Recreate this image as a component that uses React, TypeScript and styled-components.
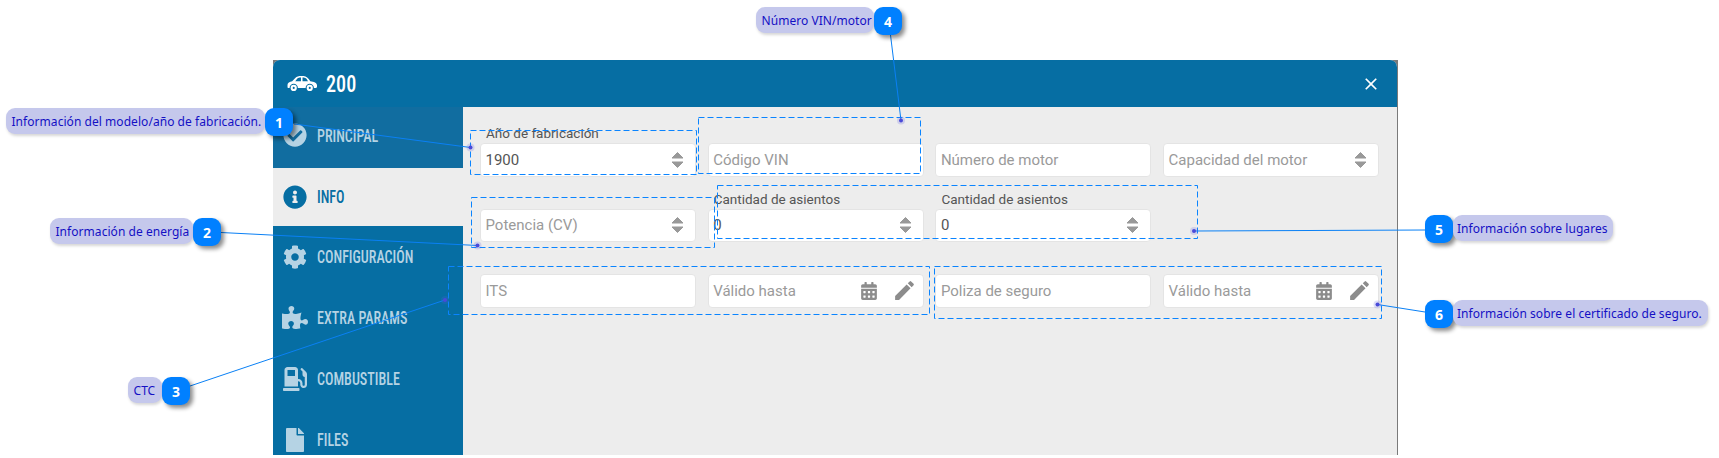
import React from "react";
import styled, { createGlobalStyle } from "styled-components";
import {
  FaCalendarAlt,
  FaCheckCircle,
  FaCog,
  FaFile,
  FaGasPump,
  FaInfoCircle,
  FaPuzzlePiece,
} from "react-icons/fa";
import { MdClose, MdEdit } from "react-icons/md";

const GlobalStyle = createGlobalStyle`
  html, body {
    margin: 0;
    background: #fff;
    font-family: Roboto, "Liberation Sans", sans-serif;
  }
`;

const Page = styled.div`
  position: relative;
  width: 1719px;
  height: 458px;
  overflow: hidden;
  padding: 60px 0 0 273px;
  box-sizing: border-box;
`;

const Backdrop = styled.div`
  width: 1125px;
  height: 395px;
  background: #7a7a7a;
  padding-right: 1px;
  box-sizing: border-box;
`;

const Modal = styled.div`
  height: 100%;
  display: flex;
  flex-direction: column;
  border-radius: 7px 7px 0 0;
  overflow: hidden;
  background: #ededed;
`;

const Header = styled.header`
  height: 47px;
  flex: none;
  display: flex;
  align-items: center;
  gap: 9px;
  padding: 0 16px 0 14px;
  background: #066ea3;
  color: #fff;
`;

const Title = styled.h1`
  flex: 1;
  margin: 0;
  font-size: 24px;
  font-weight: 500;
  font-stretch: 75%;
  line-height: 1;
  transform: scaleX(0.84);
  transform-origin: left center;
`;

const Body = styled.div`
  flex: 1;
  display: flex;
  min-height: 0;
`;

const Sidebar = styled.nav`
  width: 190px;
  flex: none;
  background: #066ea3;
  overflow: hidden;
`;

const NavItem = styled.div<{ $active?: boolean; $selected?: boolean; $height?: number }>`
  height: ${(p) => p.$height ?? 61}px;
  box-sizing: border-box;
  display: flex;
  align-items: center;
  gap: 9px;
  padding: 0 0 ${(p) => (p.$selected ? 5 : p.$active ? 1 : 0)}px 9px;
  background: ${(p) => (p.$active ? "#ededed" : p.$selected ? "#116da0" : "#066ea3")};
  color: ${(p) => (p.$active ? "#066ea3" : "#b5d3e4")};
`;

const NavIcon = styled.span`
  width: 26px;
  display: flex;
  justify-content: center;
  font-size: 24px;
  flex: none;
`;

const NavLabel = styled.span`
  display: inline-block;
  font-size: 19px;
  font-weight: 500;
  font-stretch: 75%;
  white-space: nowrap;
  transform: scaleX(0.74);
  transform-origin: left center;
`;

const Form = styled.main`
  flex: 1;
  display: grid;
  grid-template-columns: repeat(4, 216px);
  grid-auto-rows: max-content;
  column-gap: 11.7px;
  row-gap: 12px;
  padding: 16px 18px 0 17px;
`;

const Field = styled.div`
  display: flex;
  flex-direction: column;
`;

const FieldLabel = styled.label`
  height: 20px;
  padding-left: 6px;
  font-size: 13.5px;
  line-height: 20px;
  color: #555;
  white-space: nowrap;
`;

const InputBox = styled.div`
  height: 33.5px;
  box-sizing: border-box;
  display: flex;
  align-items: center;
  padding: 0 6px 0 4.5px;
  background: #fff;
  border: 1px solid #e4e4e4;
  border-radius: 4px;
`;

const InputText = styled.span<{ $placeholder?: boolean }>`
  flex: 1;
  font-size: 15px;
  color: ${(p) => (p.$placeholder ? "#9a9a9a" : "#555")};
  white-space: nowrap;
`;

const Spinner = styled.svg`
  width: 13px;
  height: 18px;
  margin-right: 5px;
  fill: #999;
  stroke: #999;
  stroke-width: 1;
  stroke-linejoin: round;
  flex: none;
`;

const DateIcons = styled.span`
  display: flex;
  align-items: center;
  gap: 14px;
  color: #8c8c8c;
`;

const Overlay = styled.svg`
  position: absolute;
  left: 0;
  top: 0;
  width: 1719px;
  height: 458px;
  pointer-events: none;
`;

const Callout = styled.div<{ $x: number; $y: number }>`
  position: absolute;
  left: ${(p) => p.$x}px;
  top: ${(p) => p.$y}px;
  display: flex;
  align-items: flex-start;
`;

const CalloutText = styled.span<{ $w: number; $flip?: boolean }>`
  width: ${(p) => p.$w}px;
  height: 26px;
  box-sizing: border-box;
  display: flex;
  align-items: center;
  padding-left: ${(p) => (p.$flip ? 4 : 5.5)}px;
  background: #c5c8ec;
  border-radius: 9px;
  box-shadow: 1px 2px 3px rgba(0, 0, 0, 0.16);
  color: #1410c4;
  font-family: "Noto Sans", "DejaVu Sans", sans-serif;
  font-size: 12px;
  letter-spacing: 0.05px;
  white-space: nowrap;
`;

const Badge = styled.span`
  width: 28px;
  height: 28px;
  flex: none;
  display: flex;
  align-items: center;
  justify-content: center;
  background: #0080ff;
  border-radius: 9px;
  box-shadow: 3px 3px 4px rgba(0, 0, 0, 0.45);
  color: #fff;
  font-family: "Noto Sans", "DejaVu Sans", sans-serif;
  font-size: 14px;
  font-weight: 700;
`;

function CarIcon() {
  return (
    <svg width="30" height="15" viewBox="0 0 29 14.5" fill="#fff" fillRule="evenodd">
      <path d="M.5 8.5C.5 6.5 2.5 5.5 5 5l3-3C9.5.5 11 0 14 0s5 .5 7 3l1.5 2C26 5.5 29 6.5 29 9v1.5c0 .5-.5 1-1 1h-2a4 4 0 0 0-8 0h-7.500a4 4 0 0 0-8 0H1c-.4 0-.5-.5-.5-1ZM8 5l2-2.500c1-.8 2-1 3.500-1V5Zm7-3.500c2 0 3.200.5 4 1.500l1.300 2H15Z" />
      <path d="M6.500 8.500a3 3 0 1 0 0 6 3 3 0 0 0 0-6Zm0 2a1 1 0 1 1 0 2 1 1 0 0 1 0-2ZM22 8.500a3 3 0 1 0 0 6 3 3 0 0 0 0-6Zm0 2a1 1 0 1 1 0 2 1 1 0 0 1 0-2Z" />
    </svg>
  );
}

function SpinArrows() {
  return (
    <Spinner viewBox="0 0 13 18">
      <path d="M6.500 1.500 12 7H1Z" />
      <path d="M1 11h11l-5.500 5.500Z" />
    </Spinner>
  );
}

function DateControls() {
  return (
    <DateIcons>
      <FaCalendarAlt size={18} />
      <MdEdit size={25} />
    </DateIcons>
  );
}

type FieldProps = {
  label?: string;
  text: string;
  placeholder?: boolean;
  spin?: boolean;
  date?: boolean;
};

function FormField({ label, text, placeholder, spin, date }: FieldProps) {
  return (
    <Field>
      <FieldLabel>{label}</FieldLabel>
      <InputBox>
        <InputText $placeholder={placeholder}>{text}</InputText>
        {spin && <SpinArrows />}
        {date && <DateControls />}
      </InputBox>
    </Field>
  );
}

const navItems = [
  { label: "PRINCIPAL", icon: <FaCheckCircle />, selected: true },
  { label: "INFO", icon: <FaInfoCircle />, active: true, height: 58 },
  { label: "CONFIGURACIÓN", icon: <FaCog /> },
  { label: "EXTRA PARAMS", icon: <FaPuzzlePiece size={27} /> },
  { label: "COMBUSTIBLE", icon: <FaGasPump /> },
  { label: "FILES", icon: <FaFile /> },
];

const boxes = [
  { x: 470.5, y: 130.5, w: 226, h: 44 },
  { x: 471.5, y: 197.5, w: 243, h: 50 },
  { x: 448.5, y: 266.5, w: 481, h: 48 },
  { x: 698.5, y: 117.5, w: 222, h: 56 },
  { x: 717.5, y: 185.5, w: 480, h: 53 },
  { x: 934.5, y: 266.5, w: 447, h: 52 },
];

const leaders = [
  [294, 124, 470.5, 147.5],
  [221, 232.5, 477.5, 245.5],
  [190, 386, 445, 300],
  [890.5, 35, 901, 120.5],
  [1425, 230, 1194, 231],
  [1425, 312, 1377.5, 304.5],
];

const callouts = [
  { n: 1, text: "Información del modelo/año de fabricación.", x: 6, y: 108, w: 259 },
  { n: 2, text: "Información de energía", x: 50, y: 218, w: 143 },
  { n: 3, text: "CTC", x: 128, y: 377, w: 34 },
  { n: 4, text: "Número VIN/motor", x: 756, y: 7, w: 118 },
  { n: 5, text: "Información sobre lugares", x: 1425, y: 215, w: 160, flip: true },
  { n: 6, text: "Información sobre el certificado de seguro.", x: 1425, y: 300, w: 255, flip: true },
];

export default function App() {
  return (
    <Page>
      <GlobalStyle />
      <Backdrop>
        <Modal>
          <Header>
            <CarIcon />
            <Title>200</Title>
            <MdClose size={20} />
          </Header>
          <Body>
            <Sidebar>
              {navItems.map((item) => (
                <NavItem
                  key={item.label}
                  $active={item.active}
                  $selected={item.selected}
                  $height={item.height}
                >
                  <NavIcon>{item.icon}</NavIcon>
                  <NavLabel>{item.label}</NavLabel>
                </NavItem>
              ))}
            </Sidebar>
            <Form>
              <FormField label="Año de fabricación" text="1900" spin />
              <FormField text="Código VIN" placeholder />
              <FormField text="Número de motor" placeholder />
              <FormField text="Capacidad del motor" placeholder spin />

              <FormField text="Potencia (CV)" placeholder spin />
              <FormField label="Cantidad de asientos" text="0" spin />
              <FormField label="Cantidad de asientos" text="0" spin />
              <div />

              <FormField text="ITS" placeholder />
              <FormField text="Válido hasta" placeholder date />
              <FormField text="Poliza de seguro" placeholder />
              <FormField text="Válido hasta" placeholder date />
            </Form>
          </Body>
        </Modal>
      </Backdrop>

      <Overlay viewBox="0 0 1719 458">
        {boxes.map((b) => (
          <rect
            key={`${b.x}-${b.y}`}
            x={b.x}
            y={b.y}
            width={b.w}
            height={b.h}
            fill="none"
            stroke="#0a84ff"
            strokeWidth="1"
            strokeDasharray="6 3"
          />
        ))}
        {leaders.map(([x1, y1, x2, y2]) => (
          <g key={`${x1}-${y1}`}>
            <line x1={x1} y1={y1} x2={x2} y2={y2} stroke="#0a80f5" strokeWidth="1" />
            <circle cx={x2} cy={y2} r="4" fill="#5a5ae0" opacity="0.2" />
            <circle cx={x2} cy={y2} r="2" fill="#4a4ad8" />
          </g>
        ))}
      </Overlay>

      {callouts.map((c) => (
        <Callout key={c.n} $x={c.x} $y={c.y}>
          {c.flip && <Badge>{c.n}</Badge>}
          <CalloutText $w={c.w} $flip={c.flip}>
            {c.text}
          </CalloutText>
          {!c.flip && <Badge>{c.n}</Badge>}
        </Callout>
      ))}
    </Page>
  );
}
